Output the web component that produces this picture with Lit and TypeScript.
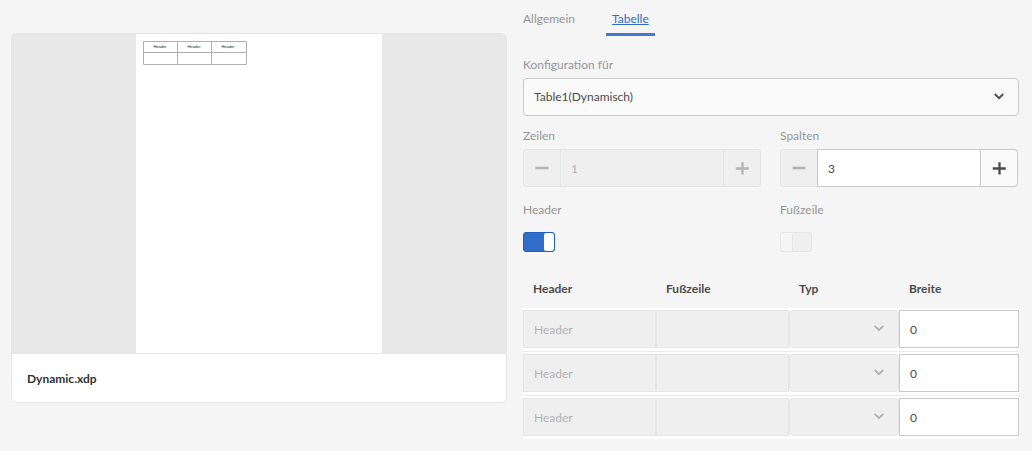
import { LitElement, html, css, svg } from "lit";
import { customElement, property, state } from "lit/decorators.js";

const chevron = html`<svg class="chevron" viewBox="0 0 12 12" aria-hidden="true">
  <path d="M1.8 3 6 7.2 10.2 3" fill="none" stroke="currentColor" stroke-width="1.9" />
</svg>`;

const controls = css`
  * {
    box-sizing: border-box;
  }
  input,
  select,
  button {
    font: inherit;
    color: inherit;
    margin: 0;
  }
  .field {
    display: block;
    width: 100%;
    height: 38px;
    padding: 0 10px;
    border: 1px solid #cacaca;
    border-radius: 0;
    background: #fff;
    color: #4b4b4b;
    appearance: none;
    outline: none;
  }
  .field:disabled {
    background: #efefef;
    border-color: #e5e5e5;
    color: #b3b3b3;
    opacity: 1;
  }
  .field::placeholder {
    color: #b3b3b3;
  }
  .select {
    display: grid;
    align-items: center;
    color: #4b4b4b;
  }
  .select.muted {
    color: #b3b3b3;
  }
  .select > * {
    grid-area: 1 / 1;
  }
  .select .field {
    border-radius: 4px;
    background: #fafafa;
  }
  .select .field:disabled {
    background: #efefef;
  }
  .chevron {
    width: 12px;
    height: 12px;
    margin-right: 14px;
    justify-self: end;
    pointer-events: none;
  }
`;

@customElement("document-card")
class DocumentCard extends LitElement {
  @property() name = "";

  static styles = css`
    :host {
      display: block;
      border: 1px solid #e6e6e6;
      border-radius: 5px;
      background: #fff;
      overflow: hidden;
    }
    .preview {
      display: flex;
      justify-content: center;
      background: #e8e8e8;
      border-bottom: 1px solid #e6e6e6;
    }
    .page {
      display: block;
      width: 246px;
      height: 319px;
      background: #fff;
    }
    .name {
      padding: 14px 15px 12px;
      font-weight: bold;
      color: #323232;
      line-height: 22px;
    }
  `;

  render() {
    return html`
      <div class="preview">
        <svg class="page" viewBox="0 0 246 319" role="img" aria-label="Dynamic.xdp">
          <path d="M7.5 7.5H110.5V30.5H7.5ZM7.5 18.5H110.5M41.5 7.5V30.5M75.5 7.5V30.5"
            fill="none" stroke="#b0b0b0" />
          ${[24, 58, 92].map(
            (x) => svg`<text x=${x} y="14" text-anchor="middle" font-size="4"
              font-family="Liberation Sans, sans-serif" fill="#222">Header</text>`
          )}
        </svg>
      </div>
      <div class="name">${this.name}</div>
    `;
  }
}

@customElement("number-stepper")
class NumberStepper extends LitElement {
  @property() label = "";
  @property({ type: Number }) value = 1;
  @property({ type: Boolean }) disabled = false;
  @property({ type: Boolean }) atMinimum = false;

  static styles = [
    controls,
    css`
      :host {
        display: block;
      }
      .label {
        display: block;
        line-height: 20px;
        margin-bottom: 3px;
        color: #959595;
      }
      .stepper {
        display: grid;
        grid-template-columns: 37px 1fr 37px;
        height: 38px;
      }
      .step {
        display: grid;
        place-items: center;
        padding: 0;
        border: 1px solid #cacaca;
        background: #fafafa;
        color: #4b4b4b;
      }
      .minus {
        border-right: 0;
        border-radius: 4px 0 0 4px;
      }
      .plus {
        border-left: 0;
        border-radius: 0 4px 4px 0;
      }
      .step:disabled {
        background: #efefef;
        border-color: #e5e5e5;
        color: #b3b3b3;
      }
      .glyph {
        width: 14px;
        height: 14px;
      }
    `,
  ];

  render() {
    return html`
      <label class="label" for="value">${this.label}</label>
      <div class="stepper">
        <button class="step minus" aria-label="Verringern"
          ?disabled=${this.disabled || this.atMinimum}
          @click=${() => (this.value -= 1)}>
          <svg class="glyph" viewBox="0 0 14 14"><path d="M.5 7H13.5" stroke="currentColor" stroke-width="2.6" /></svg>
        </button>
        <input class="field" id="value" type="text" inputmode="numeric"
          .value=${String(this.value)} ?disabled=${this.disabled} />
        <button class="step plus" aria-label="Erhöhen" ?disabled=${this.disabled}
          @click=${() => (this.value += 1)}>
          <svg class="glyph" viewBox="0 0 14 14"><path d="M.8 7.5H13.8M7.5 1.2V13.6" stroke="currentColor" stroke-width="2.3" /></svg>
        </button>
      </div>
    `;
  }
}

@customElement("app-root")
class AppRoot extends LitElement {
  @state() rows = [0, 0, 0];

  static styles = [
    controls,
    css`
      :host {
        display: grid;
        grid-template-columns: 1fr 1fr;
        gap: 16px;
        align-items: start;
        min-height: 100vh;
        box-sizing: border-box;
        padding: 0 13px 12px 11px;
        background: #f5f5f5;
        font: 12px/20px Lato, sans-serif;
        color: #4b4b4b;
      }
      .card {
        margin-top: 33px;
      }
      .tabs {
        display: flex;
        gap: 25px;
        height: 36px;
        margin-bottom: 19px;
      }
      .tab {
        padding: 9px 6px 4px;
        color: #959595;
        text-decoration: none;
        border-bottom: 3px solid transparent;
      }
      .tab:first-child {
        padding-left: 0;
      }
      .tab.active {
        color: #326ec8;
        border-color: #4178d2;
        text-decoration: underline;
      }
      .label {
        display: block;
        line-height: 20px;
        margin-bottom: 3px;
        color: #959595;
      }
      .pair {
        display: grid;
        grid-template-columns: 1fr 1fr;
        gap: 13px 19px;
        padding: 10px 1px 18px 0;
      }
      .toggle .label {
        margin-bottom: 12px;
      }
      .switch {
        appearance: none;
        display: flex;
        width: 32px;
        height: 20px;
        border: 1px solid #e5e5e5;
        border-radius: 3px;
        background: #efefef;
        overflow: hidden;
      }
      .switch::before {
        content: "";
        width: 11px;
        border-right: 1px solid #e5e5e5;
        border-radius: 2px;
        background: #f5f5f5;
      }
      .switch:checked {
        justify-content: flex-end;
        border-color: #1e5fbe;
        background: #326ec8;
      }
      .switch:checked::before {
        width: 10px;
        border-right: 0;
        background: #fff;
      }
      .table {
        width: 100%;
        table-layout: fixed;
        border-collapse: separate;
        border-spacing: 0;
      }
      .type {
        width: 110px;
      }
      .width {
        width: 120px;
      }
      .heading {
        height: 38px;
        padding: 0 10px;
        text-align: left;
        font-weight: bold;
      }
      .cell {
        padding: 2px 0 3px;
        background: #fff;
        border-bottom: 1px solid #ebebeb;
      }
      .row:last-child .cell {
        border-bottom: 0;
      }
    `,
  ];

  render() {
    return html`
      <document-card class="card" name="Dynamic.xdp"></document-card>
      <section>
        <nav class="tabs">
          <a class="tab" href="#allgemein">Allgemein</a>
          <a class="tab active" href="#tabelle" aria-current="page">Tabelle</a>
        </nav>
        <label class="label" for="target">Konfiguration für</label>
        <div class="select">
          <select class="field" id="target">
            <option>Table1(Dynamisch)</option>
          </select>
          ${chevron}
        </div>
        <div class="pair">
          <number-stepper label="Zeilen" .value=${1} .disabled=${true}></number-stepper>
          <number-stepper label="Spalten" .value=${3} .atMinimum=${true}></number-stepper>
          <div class="toggle">
            <label class="label" for="header">Header</label>
            <input class="switch" id="header" type="checkbox" role="switch" checked />
          </div>
          <div class="toggle">
            <label class="label" for="footer">Fußzeile</label>
            <input class="switch" id="footer" type="checkbox" role="switch" disabled />
          </div>
        </div>
        <table class="table">
          <colgroup>
            <col />
            <col />
            <col class="type" />
            <col class="width" />
          </colgroup>
          <thead>
            <tr>
              <th class="heading" scope="col">Header</th>
              <th class="heading" scope="col">Fußzeile</th>
              <th class="heading" scope="col">Typ</th>
              <th class="heading" scope="col">Breite</th>
            </tr>
          </thead>
          <tbody>
            ${this.rows.map(
              (width) => html`<tr class="row">
                <td class="cell"><input class="field" aria-label="Header" placeholder="Header" disabled /></td>
                <td class="cell"><input class="field" aria-label="Fußzeile" disabled /></td>
                <td class="cell">
                  <div class="select muted"><select class="field" aria-label="Typ" disabled></select>${chevron}</div>
                </td>
                <td class="cell"><input class="field" aria-label="Breite" .value=${String(width)} /></td>
              </tr>`
            )}
          </tbody>
        </table>
      </section>
    `;
  }
}
